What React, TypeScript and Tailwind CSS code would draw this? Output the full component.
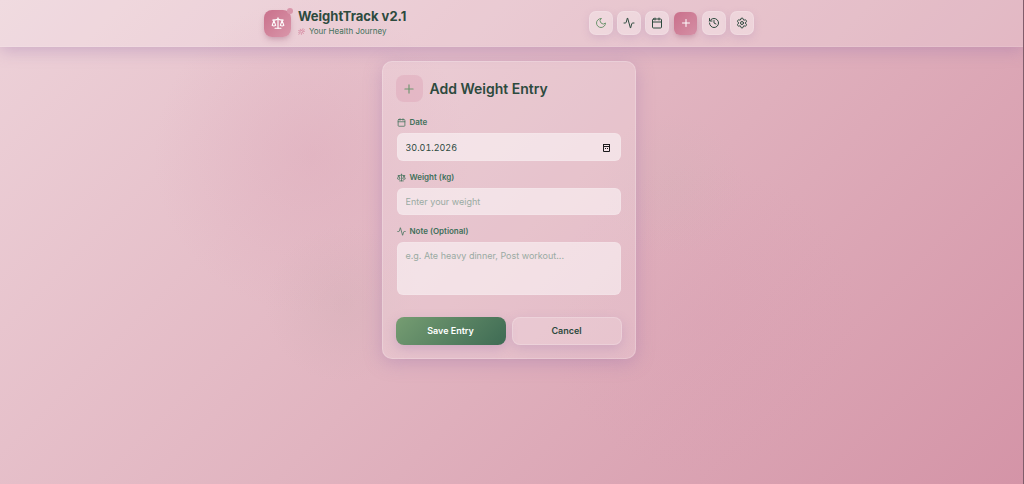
import React, { useState } from 'react';
import { Activity, Calendar, Plus, History, Scale, Settings } from 'lucide-react';

type IconProps = { className?: string };

function MoonIcon({ className }: IconProps) {
  return (
    <svg viewBox="0 0 24 24" fill="none" stroke="currentColor" strokeWidth="2" strokeLinecap="round" strokeLinejoin="round" className={className} aria-hidden="true">
      <path d="M12 3a6 6 0 0 0 9 9 9 9 0 1 1-9-9Z" />
    </svg>
  );
}

function SparkIcon({ className }: IconProps) {
  return (
    <svg viewBox="0 0 24 24" fill="none" stroke="currentColor" strokeWidth="2" strokeLinecap="round" className={className} aria-hidden="true">
      <path d="M10 9L8 4M12 9l5-7M16 9l6-3M15 13l7-1M8 13l-6 3M9 16l-6 6M13 16l-1 6M2 9l5 1M16 16l3 3" />
    </svg>
  );
}

const NAV_ITEMS = [
  { label: 'Toggle dark mode', icon: MoonIcon, tone: 'text-[#6f9670]' },
  { label: 'Dashboard', icon: Activity, tone: 'text-[#2d4a3e]' },
  { label: 'Calendar', icon: Calendar, tone: 'text-[#2d4a3e]' },
  { label: 'Add entry', icon: Plus, active: true },
  { label: 'History', icon: History, tone: 'text-[#2d4a3e]' },
  { label: 'Settings', icon: Settings, tone: 'text-[#2d4a3e]' },
];

const labelClass = 'flex items-center gap-1 text-[8px] leading-3 font-semibold text-[#40705a]';
const fieldClass =
  'block w-full rounded-md border border-white/10 bg-white/50 px-2 text-[9px] text-[#2d4a3e] placeholder:text-[#9aaba3] outline-none';

export default function App() {
  const [date, setDate] = useState('30.01.2026');
  const [weight, setWeight] = useState('');
  const [note, setNote] = useState('');

  return (
    <div className="relative min-h-screen overflow-hidden border-r border-[#805d6b] bg-linear-135 from-[#edd2d9] via-[#e1b4c0] to-[#d494a7] font-['Inter',sans-serif] text-[#2d4a3e]">
      {/* Background glows */}
      <div className="pointer-events-none absolute -top-1 left-38 size-80 bg-radial from-[#d99eb2]/30 to-transparent to-70%" />
      <div className="pointer-events-none absolute top-56 left-66 size-40 bg-radial from-[#c3a5a9]/20 to-transparent to-70%" />
      <div className="pointer-events-none absolute top-28 left-150 size-36 bg-radial from-[#c7b5b2]/15 to-transparent to-70%" />
      <div className="pointer-events-none absolute top-40 left-136 size-80 bg-radial from-[#d797b0]/15 to-transparent to-70%" />

      <header className="relative border-b border-white/10 bg-white/20 pr-[5px] shadow-[0_4px_16px_rgba(150,110,170,0.35)]">
        <div className="mx-auto flex h-[46px] max-w-[490px] items-center justify-between">
          <div className="flex items-center gap-[7px]">
            <div className="relative flex size-[27px] items-center justify-center rounded-lg bg-linear-135 from-[#c9708b] to-[#d996aa] text-white shadow-md shadow-[#a0607d]/30">
              <Scale className="size-3.5" />
              <span className="absolute -top-0.5 -right-0.5 size-1.5 rounded-full bg-[#d996aa]" />
            </div>
            <div>
              <h1 className="text-[13px] leading-4 font-bold">WeightTrack v2.1</h1>
              <p className="flex items-center gap-1 text-[8px] leading-[14px] text-[#40705a]">
                <SparkIcon className="size-[7px] text-[#cf718f]" />
                Your Health Journey
              </p>
            </div>
          </div>

          <nav className="flex items-center gap-1">
            {NAV_ITEMS.map(({ label, icon: Icon, tone, active }) => (
              <button
                key={label}
                type="button"
                aria-label={label}
                className={
                  active
                    ? 'mx-px flex size-[23px] items-center justify-center rounded-md bg-linear-135 from-[#c9708b] to-[#d58fa5] text-white shadow-md shadow-[#a0607d]/30'
                    : `flex size-6 items-center justify-center rounded-[7px] border border-white/15 bg-white/30 shadow-[0_3px_8px_rgba(150,110,170,0.2)] ${tone}`
                }
              >
                <Icon className="size-3" />
              </button>
            ))}
          </nav>
        </div>
      </header>

      <div className="relative mt-3.5 pr-1.5">
        <main className="mx-auto w-full max-w-[254px] rounded-[10px] border border-white/20 bg-white/20 p-[13px] shadow-[0_4px_18px_rgba(150,110,170,0.35)]">
          <div className="flex items-center gap-[7px]">
            <div className="flex size-[27px] items-center justify-center rounded-lg bg-[#dca0b5]/40 text-[#6f9670]">
              <Plus className="size-3.5" />
            </div>
            <h2 className="text-[14px] leading-5 font-semibold">Add Weight Entry</h2>
          </div>

          <form className="mt-3.5" onSubmit={(e) => e.preventDefault()}>
            <div className="space-y-[10px] px-px">
              <div>
                <label htmlFor="date" className={labelClass}>
                  <Calendar className="size-[9px]" />
                  Date
                </label>
                <div className="relative mt-[5px]">
                  <input id="date" type="text" value={date} onChange={(e) => setDate(e.target.value)} className={`${fieldClass} h-7 tabular-nums`} />
                  <button type="button" aria-label="Open calendar" className="absolute inset-y-0 right-2.5 text-[#1c1a1c]">
                    <svg viewBox="0 0 9 9" className="size-[9px]" fill="none" stroke="currentColor" aria-hidden="true">
                      <path d="M1.5 1v7.500h6V1" />
                      <path d="M1 1.500h7M2 3.500h5" />
                      <path d="M3 5.500h1M5 5.500h1" />
                    </svg>
                  </button>
                </div>
              </div>

              <div>
                <label htmlFor="weight" className={labelClass}>
                  <Scale className="size-[9px]" />
                  Weight (kg)
                </label>
                <input id="weight" type="text" inputMode="decimal" placeholder="Enter your weight" value={weight} onChange={(e) => setWeight(e.target.value)} className={`${fieldClass} mt-[5px] h-[27px]`} />
              </div>

              <div>
                <label htmlFor="note" className={labelClass}>
                  <Activity className="size-[9px]" />
                  Note (Optional)
                </label>
                <textarea id="note" placeholder="e.g. Ate heavy dinner, Post workout..." value={note} onChange={(e) => setNote(e.target.value)} className={`${fieldClass} mt-[5px] h-[53px] resize-none py-[7px] leading-3`} />
              </div>
            </div>

            <div className="mt-[22px] grid grid-cols-2 gap-1.5 text-[9px] font-semibold">
              <button type="submit" className="h-7 rounded-lg bg-linear-135 from-[#769d72] to-[#3e6b54] text-white shadow-[0_4px_12px_rgba(150,110,170,0.3)]">
                Save Entry
              </button>
              <button type="button" className="h-7 rounded-lg border border-white/20 bg-white/15 shadow-[0_4px_12px_rgba(150,110,170,0.25)]">
                Cancel
              </button>
            </div>
          </form>
        </main>
      </div>
    </div>
  );
}
